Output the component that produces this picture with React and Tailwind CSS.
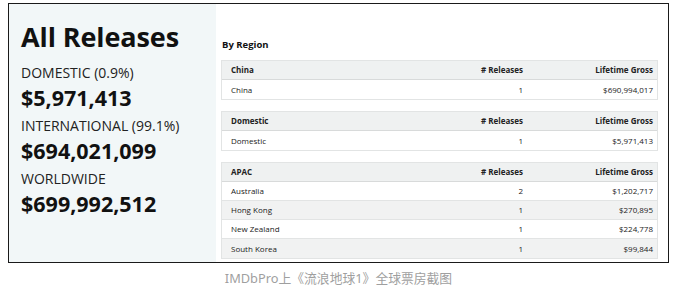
export default function App() {
  const tables = [
    { title: "China", rows: [["China", "1", "$690,994,017"]] },
    { title: "Domestic", rows: [["Domestic", "1", "$5,971,413"]] },
    {
      title: "APAC",
      rows: [
        ["Australia", "2", "$1,202,717"],
        ["Hong Kong", "1", "$270,895"],
        ["New Zealand", "1", "$224,778"],
        ["South Korea", "1", "$99,844"],
      ],
    },
  ];
  return (
    <div className="w-[673px] h-[286px] bg-white relative overflow-hidden" style={{ fontFamily: '"Open Sans", "Noto Sans", sans-serif' }}>
      <div className="absolute left-[8px] top-[3px] w-[661px] h-[260px] border border-[#1a1a1a] flex">
        <div className="w-[207px] bg-[#f2f7f8] pl-[12px] pt-[15px] text-[#111]">
          <div className="text-[27px] font-bold leading-[36px] tracking-[-0.1px]">All Releases</div>
          <div className="text-[14px] leading-[22px] mt-[7px] text-[#222]">DOMESTIC (0.9%)</div>
          <div className="text-[21.5px] font-bold leading-[28px]">$5,971,413</div>
          <div className="text-[14px] leading-[22px] mt-[3px] text-[#222]">INTERNATIONAL (99.1%)</div>
          <div className="text-[21.5px] font-bold leading-[28px]">$694,021,099</div>
          <div className="text-[14px] leading-[22px] mt-[3px] text-[#222]">WORLDWIDE</div>
          <div className="text-[21.5px] font-bold leading-[28px]">$699,992,512</div>
        </div>
        <div className="flex-1 pl-[5px] pr-[10px] pt-[34px]">
          <div className="text-[9.5px] font-bold text-[#111] leading-[14px] pl-[1px]">By Region</div>
          <div className="mt-[8px] flex flex-col gap-[11px]">
            {tables.map((t) => (
              <div key={t.title} className="border border-[#e2e4e4] text-[8px] text-[#222]">
                <div className="flex items-center h-[19px] bg-[#eff1f1] border-b border-[#d8dada] font-bold">
                  <div className="flex-1 pl-[9px]">{t.title}</div>
                  <div className="w-[60px] text-right">#&nbsp;Releases</div>
                  <div className="w-[134px] text-right pr-[4px]">Lifetime Gross</div>
                </div>
                {t.rows.map((r, i) => (
                  <div
                    key={r[0]}
                    className={
                      "flex items-center h-[19px] " +
                      (i % 2 === 1 ? "bg-[#f1f2f2] " : "bg-white ") +
                      (i < t.rows.length - 1 ? "border-b border-[#e2e4e4]" : "")
                    }
                  >
                    <div className="flex-1 pl-[9px]">{r[0]}</div>
                    <div className="w-[60px] text-right">{r[1]}</div>
                    <div className="w-[134px] text-right pr-[4px]">{r[2]}</div>
                  </div>
                ))}
              </div>
            ))}
          </div>
        </div>
      </div>
      <div
        className="absolute left-[4px] right-0 top-[270px] text-center text-[12.8px] leading-[16px] text-[#9f9f9f]"
        style={{ fontFamily: '"Noto Sans", "Noto Sans CJK SC", sans-serif' }}
      >
        IMDbPro上《流浪地球1》全球票房截图
      </div>
    </div>
  );
}
